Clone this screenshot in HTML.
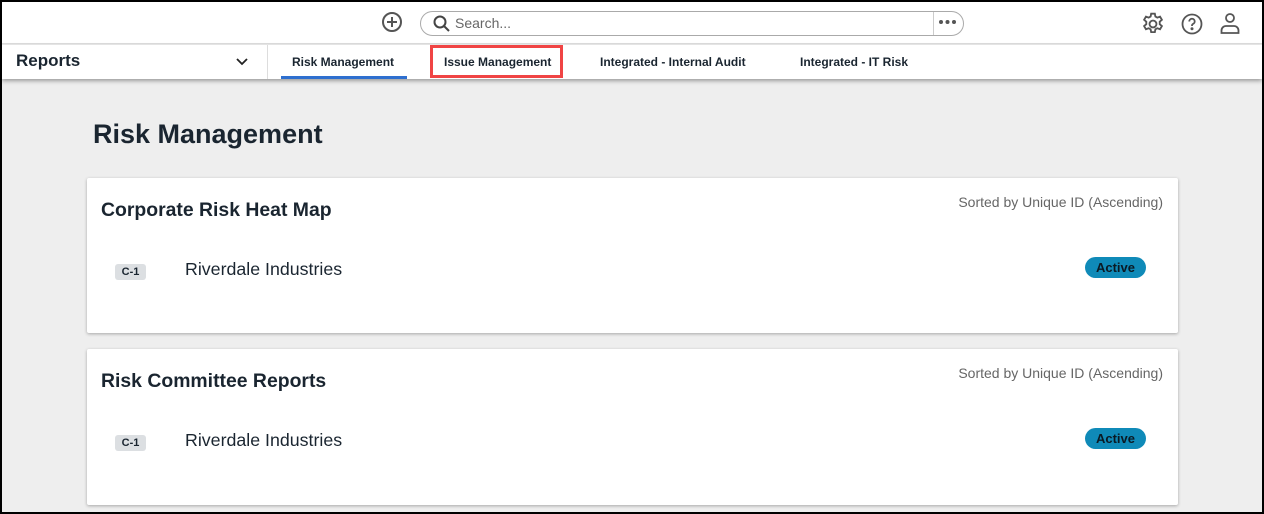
<!DOCTYPE html>
<html><head><style>
*{box-sizing:border-box;margin:0;padding:0}
body{width:1264px;height:514px;overflow:hidden;background:#000;font-family:"Liberation Sans",sans-serif;color:#1a2530}
#f{position:absolute;left:2px;top:2px;width:1260px;height:510px;background:#eeeeee;overflow:hidden}
#top{position:absolute;left:0;top:0;width:1260px;height:42px;background:#fff;border-bottom:1px solid #ddd}
#nav{position:absolute;left:0;top:43px;width:1260px;height:34px;background:#fff;box-shadow:0 2px 4px rgba(0,0,0,.35)}
.tab{position:absolute;top:10px;font-size:12px;font-weight:bold;color:#1a2530}
.card{position:absolute;left:85px;width:1091px;background:#fff;border-radius:2px;box-shadow:0 1px 3px rgba(0,0,0,.3)}
.ct{position:absolute;left:14px;top:21px;font-size:19.4px;font-weight:bold}
.sort{position:absolute;right:15px;top:16px;font-size:14px;color:#666}
.tag{position:absolute;left:28px;top:86px;width:31px;height:16px;background:#dcdfe2;border-radius:3px;font-size:11px;font-weight:900;text-align:center;line-height:16px}
.nm{position:absolute;left:98px;top:81px;font-size:17.8px}
.act{position:absolute;right:32px;top:79px;width:61px;height:21px;background:#0f8ab8;border-radius:11px;font-size:13px;font-weight:bold;text-align:center;line-height:21px;color:#0a1a24}
</style></head><body><div id="f">
<div id="top">
<svg style="position:absolute;left:379px;top:9px" width="22" height="22" viewBox="0 0 22 22" fill="none" stroke="#555" stroke-width="2"><circle cx="11" cy="11" r="9"/><path d="M11 6v10M6 11h10"/></svg>
<div style="position:absolute;left:418px;top:9px;width:544px;height:25px;border:1px solid #aaa;border-radius:13px"></div>
<svg style="position:absolute;left:431px;top:13px" width="18" height="18" viewBox="0 0 18 18" fill="none" stroke="#444" stroke-width="2"><circle cx="7" cy="7" r="5.5"/><path d="M11 11l5 5"/></svg>
<div style="position:absolute;left:453px;top:13px;font-size:14px;color:#666">Search...</div>
<div style="position:absolute;left:931px;top:10px;width:1px;height:23px;background:#ccc"></div>
<svg style="position:absolute;left:936px;top:17px" width="20" height="6"><circle cx="3" cy="3" r="2" fill="#555"/><circle cx="9.5" cy="3" r="2" fill="#555"/><circle cx="16" cy="3" r="2" fill="#555"/></svg>
<svg style="position:absolute;left:1138px;top:9px" width="26" height="26" viewBox="0 0 24 24" fill="none" stroke="#555" stroke-width="1.7"><circle cx="12" cy="12" r="3.2"/><path d="M10.3 2.5h3.4l.5 2.6 1.8 1 2.5-.9 1.7 2.9-2 1.7v2.4l2 1.7-1.7 2.9-2.5-.9-1.8 1-.5 2.6h-3.4l-.5-2.6-1.8-1-2.5.9-1.7-2.9 2-1.7v-2.4l-2-1.7 1.7-2.9 2.5.9 1.8-1z"/></svg>
<svg style="position:absolute;left:1178px;top:10px" width="24" height="24" viewBox="0 0 24 24" fill="none" stroke="#555" stroke-width="1.8"><circle cx="12" cy="12" r="9.5"/><path d="M9.3 9.5a2.7 2.7 0 1 1 3.6 2.5c-.6.3-.9.8-.9 1.5v.5"/><circle cx="12" cy="16.8" r=".6" fill="#555"/></svg>
<svg style="position:absolute;left:1216px;top:9px" width="24" height="24" viewBox="0 0 24 24" fill="none" stroke="#555" stroke-width="1.8"><circle cx="12" cy="7" r="4"/><path d="M3.5 22v-2.5c0-2.5 2-4.5 4.5-4.5h8c2.5 0 4.5 2 4.5 4.5V22z"/></svg>
</div>
<div id="nav">
<div style="position:absolute;left:14px;top:6px;font-size:17px;font-weight:bold">Reports</div>
<svg style="position:absolute;left:233px;top:11px" width="14" height="10" viewBox="0 0 14 10" fill="none" stroke="#222" stroke-width="1.8"><path d="M2 3l5 5 5-5"/></svg>
<div style="position:absolute;left:265px;top:0;width:1px;height:34px;background:#ddd"></div>
<div class="tab" style="left:290px">Risk Management</div>
<div style="position:absolute;left:279px;top:31px;width:126px;height:3px;background:#2e6fcf"></div>
<div style="position:absolute;left:428px;top:0;width:133px;height:33px;border:3px solid #f04444"></div>
<div class="tab" style="left:442px">Issue Management</div>
<div class="tab" style="left:598px">Integrated - Internal Audit</div>
<div class="tab" style="left:798px">Integrated - IT Risk</div>
</div>
<div style="position:absolute;left:91px;top:117px;font-size:27px;font-weight:bold">Risk Management</div>
<div class="card" style="top:176px;height:155px"><div class="ct">Corporate Risk Heat Map</div><div class="sort">Sorted by Unique ID (Ascending)</div><div class="tag">C-1</div><div class="nm">Riverdale Industries</div><div class="act">Active</div></div>
<div class="card" style="top:347px;height:156px"><div class="ct">Risk Committee Reports</div><div class="sort">Sorted by Unique ID (Ascending)</div><div class="tag">C-1</div><div class="nm">Riverdale Industries</div><div class="act">Active</div></div>
</div></body></html>
